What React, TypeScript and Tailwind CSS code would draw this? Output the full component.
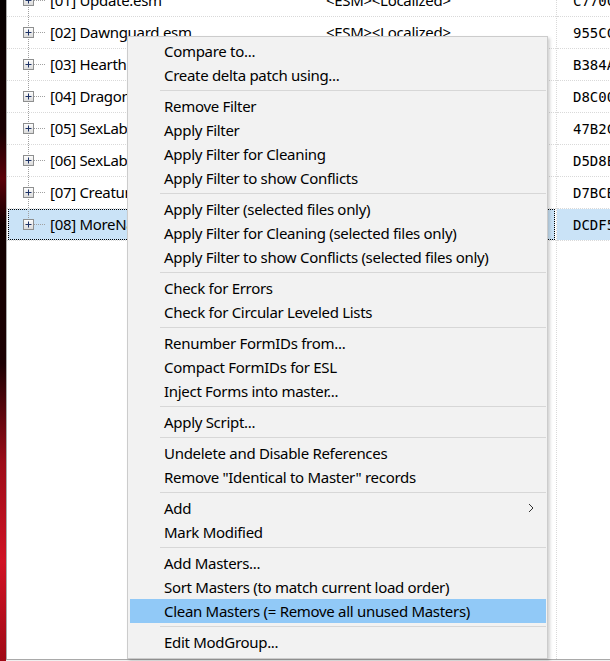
import { Fragment } from 'react';

interface PluginRow {
  name: string;
  flags: string;
  formId: string;
  selected?: boolean;
}

const ROWS: PluginRow[] = [
  { name: '[01] Update.esm', flags: '<ESM><Localized>', formId: 'C770C' },
  { name: '[02] Dawnguard.esm', flags: '<ESM><Localized>', formId: '955CC' },
  { name: '[03] HearthFires.esm', flags: '<ESM><Localized>', formId: 'B384A' },
  { name: '[04] Dragonborn.esm', flags: '<ESM><Localized>', formId: 'D8C00' },
  { name: '[05] SexLab.esm', flags: '<ESM>', formId: '47B2C' },
  { name: '[06] SexLabAroused.esm', flags: '<ESM>', formId: 'D5D8E' },
  { name: '[07] CreatureFramework.esm', flags: '<ESM>', formId: 'D7BCB' },
  { name: '[08] MoreNastyCritters.esp', flags: '', formId: 'DCDF5', selected: true },
];

type MenuEntry = { label: string; submenu?: boolean; active?: boolean } | 'sep';

const MENU: MenuEntry[] = [
  { label: 'Compare to...' },
  { label: 'Create delta patch using...' },
  'sep',
  { label: 'Remove Filter' },
  { label: 'Apply Filter' },
  { label: 'Apply Filter for Cleaning' },
  { label: 'Apply Filter to show Conflicts' },
  'sep',
  { label: 'Apply Filter (selected files only)' },
  { label: 'Apply Filter for Cleaning (selected files only)' },
  { label: 'Apply Filter to show Conflicts (selected files only)' },
  'sep',
  { label: 'Check for Errors' },
  { label: 'Check for Circular Leveled Lists' },
  'sep',
  { label: 'Renumber FormIDs from...' },
  { label: 'Compact FormIDs for ESL' },
  { label: 'Inject Forms into master...' },
  'sep',
  { label: 'Apply Script...' },
  'sep',
  { label: 'Undelete and Disable References' },
  { label: 'Remove "Identical to Master" records' },
  'sep',
  { label: 'Add', submenu: true },
  { label: 'Mark Modified' },
  'sep',
  { label: 'Add Masters...' },
  { label: 'Sort Masters (to match current load order)' },
  { label: 'Clean Masters (= Remove all unused Masters)', active: true },
  'sep',
  { label: 'Edit ModGroup...' },
];

// expand box + dotted connector lines of the tree
function TreeGlyph({ last }: { last?: boolean }) {
  return (
    <svg width="38" height="29" viewBox="0 0 38 29" className="shrink-0 overflow-visible">
      <defs>
        <linearGradient id="boxfill" x1="0" y1="0" x2="0" y2="1">
          <stop offset="0" stopColor="#ffffff" />
          <stop offset="1" stopColor="#d9d9d9" />
        </linearGradient>
      </defs>
      <line x1="19.5" y1="-3" x2="19.5" y2={last ? 10 : 32} stroke="#a0a0a0" strokeDasharray="1 1" />
      <line x1="25" y1="14.5" x2="37" y2="14.5" stroke="#a0a0a0" strokeDasharray="1 1" />
      <rect x="14.5" y="9.5" width="10" height="10" fill="url(#boxfill)" stroke="#8e8f8f" />
      <line x1="16.5" y1="14.5" x2="22.5" y2="14.5" stroke="#1d3266" />
      <line x1="19.5" y1="11.5" x2="19.5" y2="17.5" stroke="#1d3266" />
    </svg>
  );
}

function ContextMenu() {
  return (
    <div className="absolute left-[127px] top-[36px] w-[421px] border border-[#cccccc] bg-[#f2f2f2] pb-[4px] pl-[2px] pr-[1px] pt-[2px] shadow-[2px_2px_3px_rgba(0,0,0,0.18)]">
      {MENU.map((entry, i) =>
        entry === 'sep' ? (
          <div key={i} className="my-[3px] ml-[30px] h-px bg-[#d7d7d7]" />
        ) : (
          <div
            key={i}
            className={`flex h-[24px] items-center justify-between pl-[34px] pr-[12px] ${
              entry.active ? 'bg-[#91c9f7]' : ''
            }`}
          >
            <span>{entry.label}</span>
            {entry.submenu && (
              <svg width="6" height="10" viewBox="0 0 6 10">
                <path d="M1 1 L5 5 L1 9" fill="none" stroke="#333333" strokeWidth="1" />
              </svg>
            )}
          </div>
        ),
      )}
    </div>
  );
}

export default function App() {
  return (
    <div className="relative flex h-[661px] w-[610px] overflow-hidden bg-[#f0f0f0] font-['Noto_Sans',sans-serif] text-[15px] leading-none tracking-[-0.3px] text-black">
      {/* desktop wallpaper peeking out at the left */}
      <div className="w-[6px] shrink-0 bg-[linear-gradient(180deg,#050000_0%,#1a0002_20%,#5a0008_27%,#120000_34%,#1c0002_55%,#9c0c18_70%,#d01224_85%,#a00a16_100%)]" />

      <div className="flex-1">
        <div className="flex h-[660px] overflow-hidden border-b border-l border-[#a9a9a9] bg-white">
          {/* name + flags columns */}
          <div className="w-[549px] shrink-0 -mt-[15px]">
            {ROWS.map((row, i) => (
              <div key={row.name} className="flex h-[32px] border-b border-dotted border-[#d9d9d9]">
                <div
                  className={`mx-[1px] flex flex-1 items-center border border-dotted ${
                    row.selected ? 'border-black bg-[#cae3f7]' : 'border-transparent'
                  }`}
                >
                  <div className="flex w-[317px] shrink-0 items-center">
                    <TreeGlyph last={i === ROWS.length - 1} />
                    <span className="ml-[3px] whitespace-nowrap">{row.name}</span>
                  </div>
                  <span className="whitespace-nowrap">{row.flags}</span>
                </div>
              </div>
            ))}
          </div>

          {/* FormID column */}
          <div className="flex-1 border-l border-dotted border-[#d9d9d9]">
            <div className="-mt-[15px]">
              {ROWS.map((row) => (
                <Fragment key={row.formId}>
                  <div className="flex h-[32px] border-b border-dotted border-[#d9d9d9]">
                    <div
                      className={`flex flex-1 items-center pl-[16px] font-['DejaVu_Sans_Mono',monospace] text-[14px] tracking-normal ${
                        row.selected ? 'bg-[#cae3f7]' : ''
                      }`}
                    >
                      {row.formId}
                    </div>
                  </div>
                </Fragment>
              ))}
            </div>
          </div>
        </div>
      </div>

      <ContextMenu />
    </div>
  );
}
